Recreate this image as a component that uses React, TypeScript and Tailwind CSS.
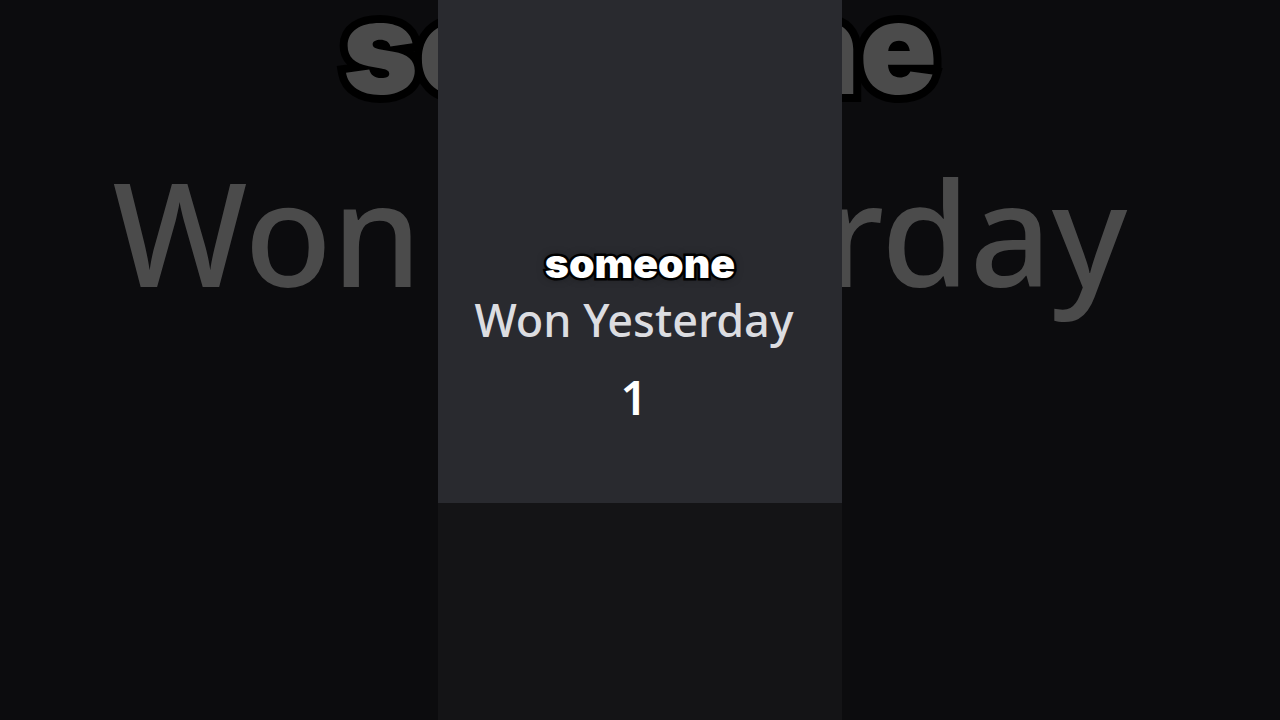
const clip = {
  caption: "someone",
  label: "Won Yesterday",
  value: 1
};

function Backdrop() {
  return (
    <div
      aria-hidden="true"
      className="col-start-1 row-start-1 flex min-w-0 flex-col items-center overflow-hidden whitespace-nowrap text-[#4b4b4b]"
    >
      <p className="font-[Inter,sans-serif] text-[128px] leading-[96px] font-black [-webkit-text-stroke:16px_#000] [paint-order:stroke_fill]">
        {clip.caption}
      </p>
      <p className="mt-14 pr-10 font-['Noto_Sans',sans-serif] text-[143px] leading-[160px] font-medium">
        {clip.label}
      </p>
    </div>
  );
}

function Clip() {
  return (
    <section className="z-10 col-start-1 row-start-1 grid aspect-[101/180] h-screen grid-rows-[503fr_217fr] justify-self-center bg-[#141416]">
      <div className="flex flex-col items-center bg-[#292a2f] pt-[239px] whitespace-nowrap">
        <p className="font-[Inter,sans-serif] text-[41px] leading-[48px] font-black text-white [-webkit-text-stroke:5px_#000] [paint-order:stroke_fill] [text-shadow:0_0_8px_rgb(0_0_0/0.5)]">
          {clip.caption}
        </p>
        <dl className="mt-[3px] pr-3 text-center font-['Noto_Sans',sans-serif] text-[45px] leading-[60px]">
          <dt className="font-medium text-[#dcdde1]">{clip.label}</dt>
          <dd className="mt-[17px] text-[47px] font-semibold text-white">{clip.value}</dd>
        </dl>
      </div>
    </section>
  );
}

export default function App() {
  return (
    <main className="grid h-screen grid-cols-1 grid-rows-1 overflow-hidden bg-[#0c0c0e]">
      <Backdrop />
      <Clip />
    </main>
  );
}
